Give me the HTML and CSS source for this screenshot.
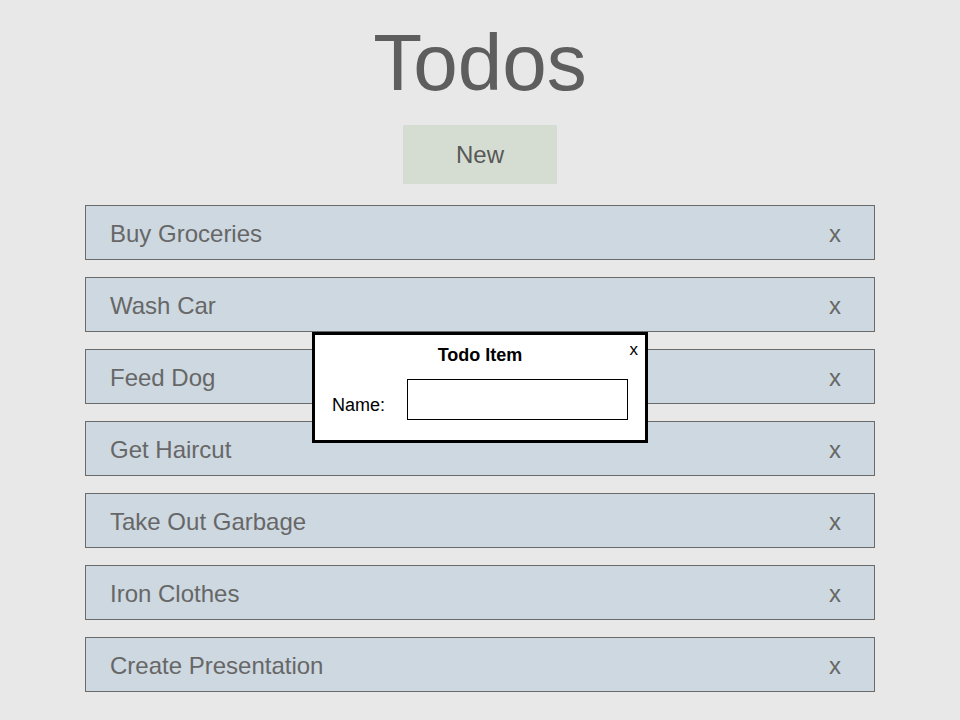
FILE: index.html
```html
<!DOCTYPE html>
<html>
<head>
<meta charset="utf-8">
<link rel="stylesheet" href="styles.css">
</head>
<body>
<div class="page">
  <h1 class="title">Todos</h1>
  <button class="new-btn">New</button>
  <ul class="todo-list">
    <li class="todo"><span class="todo-name">Buy Groceries</span><span class="todo-del">x</span></li>
    <li class="todo"><span class="todo-name">Wash Car</span><span class="todo-del">x</span></li>
    <li class="todo"><span class="todo-name">Feed Dog</span><span class="todo-del">x</span></li>
    <li class="todo"><span class="todo-name">Get Haircut</span><span class="todo-del">x</span></li>
    <li class="todo"><span class="todo-name">Take Out Garbage</span><span class="todo-del">x</span></li>
    <li class="todo"><span class="todo-name">Iron Clothes</span><span class="todo-del">x</span></li>
    <li class="todo"><span class="todo-name">Create Presentation</span><span class="todo-del">x</span></li>
  </ul>
  <div class="modal">
    <span class="modal-close">x</span>
    <div class="modal-title">Todo Item</div>
    <div class="modal-row">
      <label class="modal-label">Name:</label>
      <input class="modal-input" type="text">
    </div>
  </div>
</div>
</body>
</html>
```
FILE: styles.css
```css
html, body {
  margin: 0;
  padding: 0;
  background: #e8e8e8;
  font-family: "Liberation Sans", Arial, sans-serif;
}
.page {
  position: relative;
  width: 960px;
  height: 720px;
  padding-top: 23px;
  box-sizing: border-box;
  display: flex;
  flex-direction: column;
  align-items: center;
}
.title {
  margin: 0;
  font-size: 80px;
  line-height: 80px;
  height: 80px;
  font-weight: normal;
  color: #5e5e5e;
}
.new-btn {
  margin-top: 22px;
  width: 154px;
  height: 59px;
  border: none;
  background: #d5ddd3;
  color: #585858;
  font-family: "Liberation Sans", Arial, sans-serif;
  font-size: 24px;
  padding: 0;
}
.todo-list {
  list-style: none;
  margin: 21px 0 0;
  padding: 0;
  width: 790px;
  display: flex;
  flex-direction: column;
  gap: 17px;
}
.todo {
  box-sizing: border-box;
  height: 55px;
  border: 1px solid #6a6a6a;
  background: #cdd8e1;
  display: flex;
  align-items: center;
  justify-content: space-between;
  padding: 2px 33px 0 24px;
  font-size: 24px;
  color: #676767;
}
.modal {
  position: absolute;
  left: 312px;
  top: 332px;
  width: 336px;
  height: 111px;
  box-sizing: border-box;
  border: 3px solid #000;
  background: #fff;
  padding: 10px 0 20px 17px;
  display: flex;
  flex-direction: column;
}
.modal-close {
  position: absolute;
  top: 5px;
  right: 7px;
  font-size: 17px;
  line-height: 20px;
  color: #000;
}
.modal-title {
  font-size: 18px;
  line-height: 21px;
  font-weight: bold;
  text-align: center;
  margin-left: -17px;
  color: #000;
}
.modal-row {
  margin-top: 13px;
  display: flex;
  align-items: flex-end;
}
.modal-label {
  width: 75px;
  font-size: 18px;
  line-height: 21px;
  margin-bottom: 4px;
  color: #000;
}
.modal-input {
  box-sizing: border-box;
  width: 221px;
  height: 41px;
  border: 1px solid #000;
  margin: 0;
  padding: 0 6px;
  background: #fff;
  font-size: 18px;
  font-family: "Liberation Sans", Arial, sans-serif;
  outline: none;
}
```
